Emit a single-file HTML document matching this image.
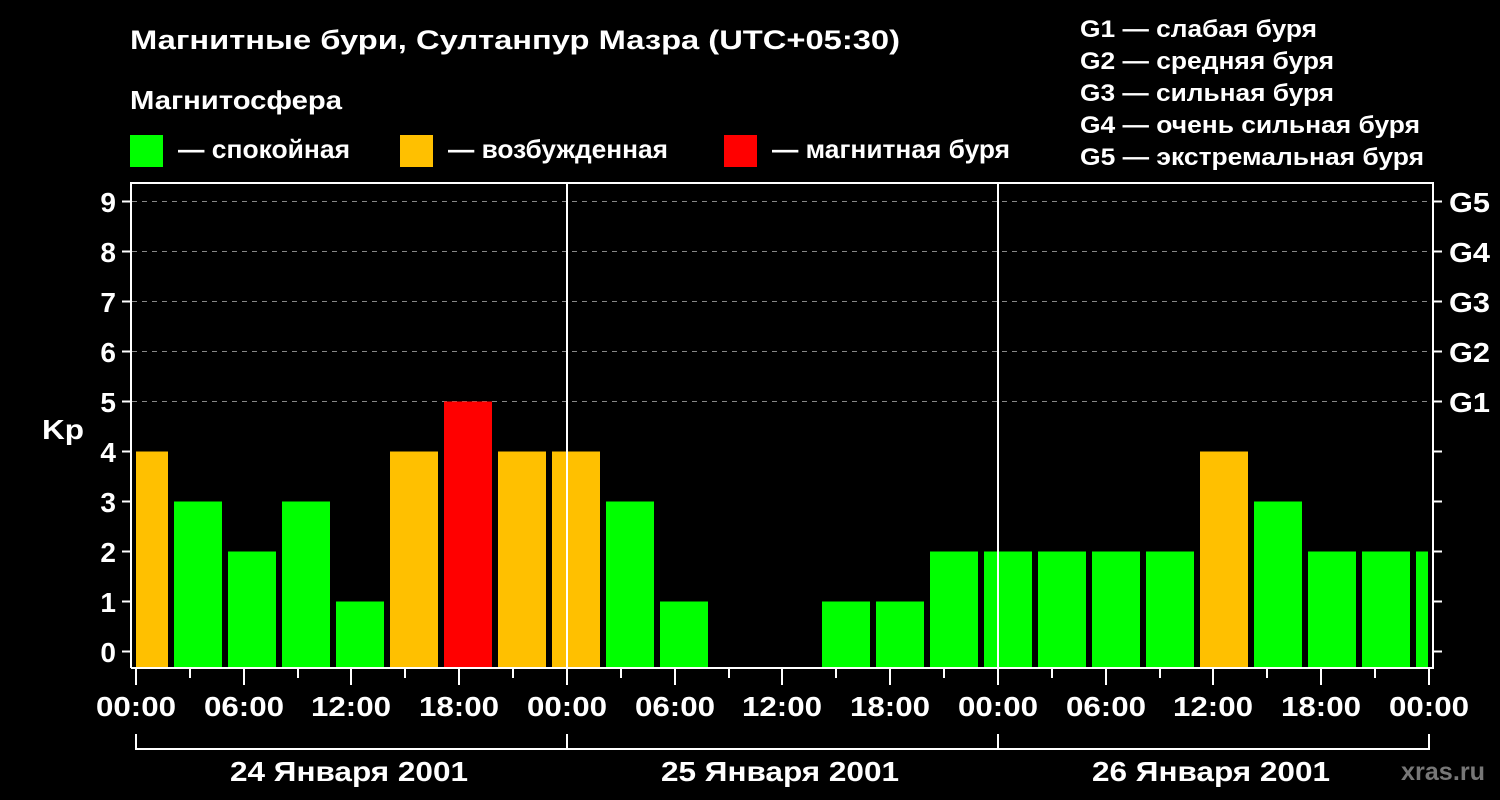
<!DOCTYPE html>
<html><head><meta charset="utf-8"><style>
html,body{margin:0;padding:0;background:#000;}
svg{display:block;}
text{font-family:"Liberation Sans",sans-serif;font-weight:bold;fill:#fff;}
</style></head><body>
<svg width="1500" height="800" viewBox="0 0 1500 800" xmlns="http://www.w3.org/2000/svg">
<rect width="1500" height="800" fill="#000"/>
<text x="130" y="49" font-size="27" textLength="770" lengthAdjust="spacingAndGlyphs">Магнитные бури, Султанпур Мазра (UTC+05:30)</text>
<text x="130" y="109" font-size="26" textLength="212" lengthAdjust="spacingAndGlyphs">Магнитосфера</text>
<rect x="130" y="135" width="33" height="32" fill="#00ff00"/>
<text x="178" y="158" font-size="26" textLength="172" lengthAdjust="spacingAndGlyphs">— спокойная</text>
<rect x="400" y="135" width="33" height="32" fill="#ffc000"/>
<text x="448" y="158" font-size="26" textLength="220" lengthAdjust="spacingAndGlyphs">— возбужденная</text>
<rect x="724" y="135" width="33" height="32" fill="#ff0000"/>
<text x="772" y="158" font-size="26" textLength="238" lengthAdjust="spacingAndGlyphs">— магнитная буря</text>
<g font-size="24" lengthAdjust="spacingAndGlyphs">
<text x="1080" y="37" textLength="237" lengthAdjust="spacingAndGlyphs">G1 — слабая буря</text>
<text x="1080" y="69" textLength="254" lengthAdjust="spacingAndGlyphs">G2 — средняя буря</text>
<text x="1080" y="101" textLength="254" lengthAdjust="spacingAndGlyphs">G3 — сильная буря</text>
<text x="1080" y="133" textLength="340" lengthAdjust="spacingAndGlyphs">G4 — очень сильная буря</text>
<text x="1080" y="165" textLength="344" lengthAdjust="spacingAndGlyphs">G5 — экстремальная буря</text>
</g>
<g stroke="#888" stroke-width="1" stroke-dasharray="5,5">
<line x1="132" y1="201.5" x2="1432" y2="201.5"/>
<line x1="132" y1="251.5" x2="1432" y2="251.5"/>
<line x1="132" y1="301.5" x2="1432" y2="301.5"/>
<line x1="132" y1="351.5" x2="1432" y2="351.5"/>
<line x1="132" y1="401.5" x2="1432" y2="401.5"/>
</g>
<g>
<rect x="136" y="451.5" width="32" height="216.5" fill="#ffc000"/>
<rect x="174" y="501.5" width="48" height="166.5" fill="#00ff00"/>
<rect x="228" y="551.5" width="48" height="116.5" fill="#00ff00"/>
<rect x="282" y="501.5" width="48" height="166.5" fill="#00ff00"/>
<rect x="336" y="601.5" width="48" height="66.5" fill="#00ff00"/>
<rect x="390" y="451.5" width="48" height="216.5" fill="#ffc000"/>
<rect x="444" y="401.5" width="48" height="266.5" fill="#ff0000"/>
<rect x="498" y="451.5" width="48" height="216.5" fill="#ffc000"/>
<rect x="552" y="451.5" width="48" height="216.5" fill="#ffc000"/>
<rect x="606" y="501.5" width="48" height="166.5" fill="#00ff00"/>
<rect x="660" y="601.5" width="48" height="66.5" fill="#00ff00"/>
<rect x="822" y="601.5" width="48" height="66.5" fill="#00ff00"/>
<rect x="876" y="601.5" width="48" height="66.5" fill="#00ff00"/>
<rect x="930" y="551.5" width="48" height="116.5" fill="#00ff00"/>
<rect x="984" y="551.5" width="48" height="116.5" fill="#00ff00"/>
<rect x="1038" y="551.5" width="48" height="116.5" fill="#00ff00"/>
<rect x="1092" y="551.5" width="48" height="116.5" fill="#00ff00"/>
<rect x="1146" y="551.5" width="48" height="116.5" fill="#00ff00"/>
<rect x="1200" y="451.5" width="48" height="216.5" fill="#ffc000"/>
<rect x="1254" y="501.5" width="48" height="166.5" fill="#00ff00"/>
<rect x="1308" y="551.5" width="48" height="116.5" fill="#00ff00"/>
<rect x="1362" y="551.5" width="48" height="116.5" fill="#00ff00"/>
<rect x="1416" y="551.5" width="12" height="116.5" fill="#00ff00"/>
</g>
<g stroke="#fff" stroke-width="2" fill="none">
<path d="M131 668 V183 H1433 V668 H131"/>
<line x1="567" y1="183" x2="567" y2="668"/>
<line x1="998" y1="183" x2="998" y2="668"/>
</g>
<g stroke="#fff" stroke-width="2">
<line x1="122" y1="201.5" x2="131" y2="201.5"/><line x1="122" y1="251.5" x2="131" y2="251.5"/>
<line x1="122" y1="301.5" x2="131" y2="301.5"/><line x1="122" y1="351.5" x2="131" y2="351.5"/>
<line x1="122" y1="401.5" x2="131" y2="401.5"/><line x1="122" y1="451.5" x2="131" y2="451.5"/>
<line x1="122" y1="501.5" x2="131" y2="501.5"/><line x1="122" y1="551.5" x2="131" y2="551.5"/>
<line x1="122" y1="601.5" x2="131" y2="601.5"/><line x1="122" y1="651.5" x2="131" y2="651.5"/>
<line x1="1433" y1="201.5" x2="1442" y2="201.5"/><line x1="1433" y1="251.5" x2="1442" y2="251.5"/>
<line x1="1433" y1="301.5" x2="1442" y2="301.5"/><line x1="1433" y1="351.5" x2="1442" y2="351.5"/>
<line x1="1433" y1="401.5" x2="1442" y2="401.5"/><line x1="1433" y1="451.5" x2="1442" y2="451.5"/>
<line x1="1433" y1="501.5" x2="1442" y2="501.5"/><line x1="1433" y1="551.5" x2="1442" y2="551.5"/>
<line x1="1433" y1="601.5" x2="1442" y2="601.5"/><line x1="1433" y1="651.5" x2="1442" y2="651.5"/>
</g>
<g font-size="28" text-anchor="end">
<text x="116" y="212">9</text><text x="116" y="262">8</text><text x="116" y="312">7</text>
<text x="116" y="362">6</text><text x="116" y="412">5</text><text x="116" y="462">4</text>
<text x="116" y="512">3</text><text x="116" y="562">2</text><text x="116" y="612">1</text>
<text x="116" y="662">0</text>
</g>
<text x="42" y="439" font-size="28" textLength="42" lengthAdjust="spacingAndGlyphs">Kp</text>
<g font-size="28">
<text x="1449" y="212" textLength="41" lengthAdjust="spacingAndGlyphs">G5</text><text x="1449" y="262" textLength="41" lengthAdjust="spacingAndGlyphs">G4</text><text x="1449" y="312" textLength="41" lengthAdjust="spacingAndGlyphs">G3</text>
<text x="1449" y="362" textLength="41" lengthAdjust="spacingAndGlyphs">G2</text><text x="1449" y="412" textLength="41" lengthAdjust="spacingAndGlyphs">G1</text>
</g>
<g stroke="#fff" stroke-width="2">
<line x1="136" y1="668" x2="136" y2="685"/><line x1="190" y1="668" x2="190" y2="678"/>
<line x1="244" y1="668" x2="244" y2="685"/><line x1="298" y1="668" x2="298" y2="678"/>
<line x1="351" y1="668" x2="351" y2="685"/><line x1="405" y1="668" x2="405" y2="678"/>
<line x1="459" y1="668" x2="459" y2="685"/><line x1="513" y1="668" x2="513" y2="678"/>
<line x1="567" y1="668" x2="567" y2="685"/><line x1="621" y1="668" x2="621" y2="678"/>
<line x1="675" y1="668" x2="675" y2="685"/><line x1="729" y1="668" x2="729" y2="678"/>
<line x1="782" y1="668" x2="782" y2="685"/><line x1="836" y1="668" x2="836" y2="678"/>
<line x1="890" y1="668" x2="890" y2="685"/><line x1="944" y1="668" x2="944" y2="678"/>
<line x1="998" y1="668" x2="998" y2="685"/><line x1="1052" y1="668" x2="1052" y2="678"/>
<line x1="1106" y1="668" x2="1106" y2="685"/><line x1="1160" y1="668" x2="1160" y2="678"/>
<line x1="1213" y1="668" x2="1213" y2="685"/><line x1="1267" y1="668" x2="1267" y2="678"/>
<line x1="1321" y1="668" x2="1321" y2="685"/><line x1="1375" y1="668" x2="1375" y2="678"/>
<line x1="1429" y1="668" x2="1429" y2="685"/>
<path d="M136 734 V749 H1429 V734 M567 734 V749 M998 734 V749" fill="none"/>
</g>
<g font-size="28" text-anchor="middle">
<text x="136" y="716" textLength="80" lengthAdjust="spacingAndGlyphs">00:00</text><text x="244" y="716" textLength="80" lengthAdjust="spacingAndGlyphs">06:00</text><text x="351" y="716" textLength="80" lengthAdjust="spacingAndGlyphs">12:00</text>
<text x="459" y="716" textLength="80" lengthAdjust="spacingAndGlyphs">18:00</text><text x="567" y="716" textLength="80" lengthAdjust="spacingAndGlyphs">00:00</text><text x="675" y="716" textLength="80" lengthAdjust="spacingAndGlyphs">06:00</text>
<text x="782" y="716" textLength="80" lengthAdjust="spacingAndGlyphs">12:00</text><text x="890" y="716" textLength="80" lengthAdjust="spacingAndGlyphs">18:00</text><text x="998" y="716" textLength="80" lengthAdjust="spacingAndGlyphs">00:00</text>
<text x="1106" y="716" textLength="80" lengthAdjust="spacingAndGlyphs">06:00</text><text x="1213" y="716" textLength="80" lengthAdjust="spacingAndGlyphs">12:00</text><text x="1321" y="716" textLength="80" lengthAdjust="spacingAndGlyphs">18:00</text>
<text x="1429" y="716" textLength="80" lengthAdjust="spacingAndGlyphs">00:00</text>
<text x="349" y="781" textLength="238" lengthAdjust="spacingAndGlyphs">24 Января 2001</text>
<text x="780" y="781" textLength="238" lengthAdjust="spacingAndGlyphs">25 Января 2001</text>
<text x="1211" y="781" textLength="238" lengthAdjust="spacingAndGlyphs">26 Января 2001</text>
</g>
<text x="1485" y="780" font-size="25" text-anchor="end" textLength="84" lengthAdjust="spacingAndGlyphs" style="fill:#777">xras.ru</text>
</svg>
</body></html>
